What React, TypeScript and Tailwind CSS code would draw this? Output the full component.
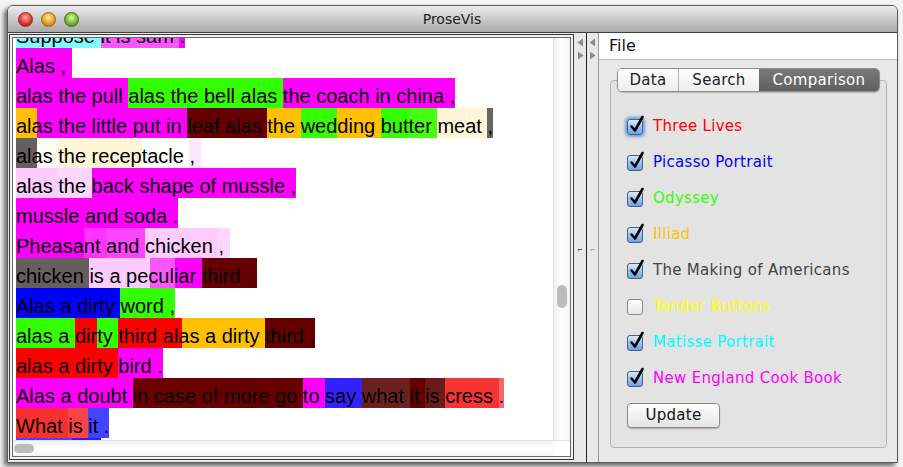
import React from "react";

// [text, background] — background is a colour or a gradient for mid-glyph splits
type Seg = [string, string];

const M = "#ff00ff";
const G = "#33ff00";
const O = "#ffc000";
const DR = "#660000";
const GR = "#675f5f";
const CR = "#fff6d8";
const LP = "#ffccff";
const B = "#0000ff";
const R = "#ff0000";
const W = "#ffffff";

const split = (a: string, px: number, b: string) =>
  `linear-gradient(to right, ${a} 0 ${px}px, ${b} ${px}px)`;

const lines: Seg[][] = [
  [["Suppose ", "#80ffff"], ["it is sam ", "#ff55ff"], [".", M]],
  [["Alas , ", M]],
  [["alas the pull ", M], ["alas the bell alas ", G], ["the coach in china ,", M]],
  [
    ["alas the little put in ", split(O, 21, M)],
    ["leaf alas ", DR],
    ["the ", O],
    ["wed", G],
    ["ding ", O],
    ["but", G],
    ["ter ", "#44ff11"],
    ["meat ", CR],
    [",", "#666666"],
  ],
  [
    ["alas ", split(GR, 21, "#fffcf4")],
    ["the recep", CR],
    ["tacle ", W],
    [", ", "#fbe6fb"],
  ],
  [["alas ", "#ffccff"], ["the ", "#ffd6ff"], ["back ", M], ["shape of mussle ,", M]],
  [["mussle and soda .", M]],
  [["Pheasa", M], ["nt ", "#ff33ff"], ["and ", "#ff44ff"], ["chicken ", LP], [", ", "#ffd6ff"]],
  [
    ["chicken ", GR],
    ["is a ", LP],
    ["peculiar ", `linear-gradient(to right, ${LP} 0 24px, #ff55ff 24px 49px, ${M} 49px)`],
    ["third . ", DR],
  ],
  [["Alas a dirty ", B], ["word ,", G]],
  [
    ["alas a ", G],
    ["dir", R],
    ["ty ", G],
    ["third alas a dirty ", split(R, 64, O)],
    ["third ,", DR],
  ],
  [["alas a dirty ", R], ["bird .", M]],
  [
    ["Alas a doubt ", M],
    ["in case of ", "#6a0000"],
    ["more go ", "#660000"],
    ["to ", M],
    ["say ", "#3322ff"],
    ["what ", "#6b2020"],
    ["it ", "#660000"],
    ["is ", "#6b1a1a"],
    ["cress ", "#f83333"],
    [".", "#f86666"],
  ],
  [["What ", "#f83030"], ["is ", "#f84444"], ["it .", "#4444ff"]],
  [["Suppose ", split("#4444ff", 56, "#2222ff")]],
];

const books: { name: string; color: string; checked: boolean; focus?: boolean }[] = [
  { name: "Three Lives", color: "#ff0000", checked: true, focus: true },
  { name: "Picasso Portrait", color: "#0000ff", checked: true },
  { name: "Odyssey", color: "#33ff00", checked: true },
  { name: "Illiad", color: "#ffc000", checked: true },
  { name: "The Making of Americans", color: "#444444", checked: true },
  { name: "Tender Buttons", color: "#ffff00", checked: false },
  { name: "Matisse Portrait", color: "#00ffff", checked: true },
  { name: "New England Cook Book", color: "#ff00ff", checked: true },
];

function CheckBox({ checked, focus }: { checked: boolean; focus?: boolean }) {
  return (
    <div
      className={
        "relative w-[16px] h-[16px] rounded-[3px] border " +
        (checked
          ? "border-[#4d5f7a] bg-gradient-to-b from-[#dbeafc] via-[#9cc4f0] to-[#6aa4e6]"
          : "border-[#8a8a8a] bg-gradient-to-b from-[#ffffff] to-[#e6e6e6]") +
        (focus ? " shadow-[0_0_3px_2px_rgba(80,140,230,0.8)]" : "")
      }
    >
      {checked && (
        <svg
          className="absolute left-[1px] top-[-5px] overflow-visible"
          width="16"
          height="18"
          viewBox="0 0 16 18"
        >
          <path
            d="M2.5 11.5 L6 15.5 L13.5 2"
            fill="none"
            stroke="#000"
            strokeWidth="2.6"
            strokeLinecap="round"
            strokeLinejoin="round"
          />
        </svg>
      )}
    </div>
  );
}

function Arrows() {
  return (
    <div className="flex flex-col gap-[4px] items-center pt-[3px]">
      <svg width="7" height="9" viewBox="0 0 7 9">
        <path d="M6 0.5 L0.5 4.5 L6 8.5 Z" fill="#8c8c8c" />
      </svg>
      <svg width="7" height="9" viewBox="0 0 7 9">
        <path d="M1 0.5 L6.5 4.5 L1 8.5 Z" fill="#8c8c8c" />
      </svg>
    </div>
  );
}

export default function App() {
  return (
    <div className="w-[903px] h-[467px] bg-[#f4f4f4] overflow-hidden pt-[5px] pl-[7px] font-['Liberation_Sans',Arial,sans-serif]">
      <div className="w-[891px] h-[458px] rounded-t-[6px] border border-[#5a5a5a] shadow-[-3px_3px_5px_rgba(0,0,0,0.6)] flex flex-col overflow-hidden">
        {/* title bar */}
        <div className="h-[27px] shrink-0 bg-gradient-to-b from-[#ececec] to-[#a9a9a9] border-b border-[#404040] flex items-center">
          <div className="flex items-center gap-[8px] pl-[10px]">
            <div className="w-[15px] h-[15px] rounded-full bg-[radial-gradient(circle_at_50%_35%,#ffb0a8,#e0382c_55%,#9a1a12)] border border-[#8a2a22]" />
            <div className="w-[15px] h-[15px] rounded-full bg-[radial-gradient(circle_at_50%_35%,#ffe9a8,#e8a020_55%,#9a6a10)] border border-[#8a6a22]" />
            <div className="w-[15px] h-[15px] rounded-full bg-[radial-gradient(circle_at_50%_35%,#d8f5a8,#78b830_55%,#3f7a18)] border border-[#3f6a22]" />
          </div>
          <div className="flex-1 text-center pr-[72px] text-[14px] text-[#222] font-['DejaVu_Sans',sans-serif]">
            ProseVis
          </div>
        </div>

        {/* body */}
        <div className="flex-1 flex bg-[#e8e8e8]">
          {/* text pane */}
          <div className="w-[565px] h-[426px] mt-px ml-px border border-[#3a3a3a] bg-[#f2f2f2] p-[2px]">
            <div className="w-full h-full border border-[#6a6a6a] bg-white flex flex-col">
              <div className="flex h-[402px] shrink-0">
                <div className="flex-1 overflow-hidden pl-[3px]">
                  <div className="mt-[-20px] flex flex-col text-[20px] text-black">
                    {lines.map((line, i) => (
                      <div key={i} className="flex h-[30px] shrink-0">
                        {line.map(([t, c], j) => (
                          <span
                            key={j}
                            className="block h-[30px] pt-[3px] leading-[30px] whitespace-pre"
                            style={{ background: c }}
                          >
                            {t}
                          </span>
                        ))}
                      </div>
                    ))}
                  </div>
                </div>
                {/* vertical scrollbar */}
                <div className="w-[17px] border-l border-[#e2e2e2] bg-gradient-to-r from-[#f0f0f0] via-[#ffffff] to-[#f4f4f4] flex flex-col items-center">
                  <div className="h-[247px] shrink-0" />
                  <div className="w-[10px] h-[23px] rounded-full bg-[#bcbcbc]" />
                </div>
              </div>
              {/* horizontal scrollbar */}
              <div className="flex-1 flex border-t border-[#e2e2e2]">
                <div className="flex-1 bg-gradient-to-b from-[#f0f0f0] via-[#ffffff] to-[#f4f4f4] flex items-center pl-[1px]">
                  <div className="w-[20px] h-[9px] rounded-full bg-[#bcbcbc]" />
                </div>
                <div className="w-[17px] bg-white" />
              </div>
            </div>
          </div>

          {/* divider */}
          <div className="w-[24px] flex">
            <div className="w-[12px] flex flex-col items-center pt-[2px]">
              <Arrows />
              <div className="mt-[186px] text-[8px] leading-none text-[#333]">⌐</div>
            </div>
            <div className="w-px bg-[#222]" />
            <div className="w-[11px] flex flex-col items-center pt-[2px]">
              <Arrows />
              <div className="mt-[186px] text-[8px] leading-none text-[#999]">⌐</div>
            </div>
          </div>

          {/* right pane */}
          <div className="flex-1 flex flex-col font-['DejaVu_Sans',sans-serif] border-l border-[#9a9a9a]">
            <div className="h-[27px] bg-white border-b border-[#bdbdbd] flex items-center pl-[10px] text-[16px] text-[#111]">
              File
            </div>
            <div className="flex-1 pl-[11px] pr-[10px] pt-[8px] pb-[14px] flex flex-col">
              <div className="flex-1 flex flex-col">
                <div className="flex justify-center z-10">
                  <div className="flex h-[24px] rounded-[5px] border border-[#8e8e8e] overflow-hidden text-[15px] tracking-[0.3px] shadow-[0_1px_1px_rgba(0,0,0,0.2)]">
                    <div className="w-[61px] flex items-center justify-center bg-gradient-to-b from-white to-[#ececec] text-[#222] border-r border-[#b5b5b5]">
                      Data
                    </div>
                    <div className="w-[80px] flex items-center justify-center bg-gradient-to-b from-white to-[#ececec] text-[#222]">
                      Search
                    </div>
                    <div className="w-[120px] flex items-center justify-center bg-gradient-to-b from-[#7a7a7a] to-[#5f5f5f] text-white">
                      Comparison
                    </div>
                  </div>
                </div>
                <div className="mt-[-12px] flex-1 rounded-[4px] border border-[#b4b4b4] bg-[#e3e3e3] pt-[38px] pl-[16px] flex flex-col text-[15px] tracking-[0.3px]">
                  {books.map((b) => (
                    <div key={b.name} className="h-[36px] flex items-start gap-[10px]">
                      <CheckBox checked={b.checked} focus={b.focus} />
                      <span className="leading-[17px] mt-[-1px]" style={{ color: b.color }}>
                        {b.name}
                      </span>
                    </div>
                  ))}
                  <button className="mt-[-4px] w-[93px] h-[25px] rounded-[4px] border border-[#8a8a8a] bg-gradient-to-b from-white to-[#e4e4e4] text-[15px] text-[#111] shadow-[0_1px_1px_rgba(0,0,0,0.25)]">
                    Update
                  </button>
                </div>
              </div>
            </div>
          </div>
        </div>
      </div>
    </div>
  );
}
